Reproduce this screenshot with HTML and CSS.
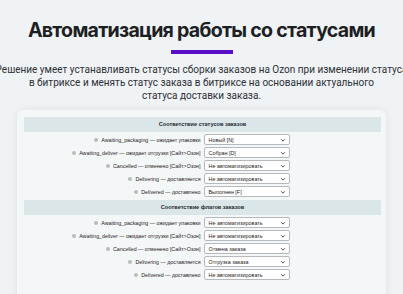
FILE: index.html
```html
<!DOCTYPE html>
<html lang="ru">
<head>
    <meta charset="utf-8">
    <title>Автоматизация работы со статусами</title>
    <link rel="stylesheet" href="styles.css">
</head>
<body>
<div class="intro">
    <h1>Автоматизация работы со статусами</h1>
    <div class="line"></div>
    <p>Решение умеет устанавливать статусы сборки заказов на Ozon при изменении статуса<br>в битриксе и менять статус заказа в битриксе на основании актуального<br>статуса доставки заказа.</p>
</div>

<div class="card">
    <div class="group">
        <div class="head">Соответствие статусов заказов</div>
        <div class="row">
            <div class="label"><i class="hint"></i>Awaiting_packaging — ожидает упаковки</div>
            <div class="field"><div class="select"><span>Новый [N]</span><svg viewBox="0 0 8 8"><path d="M1.5 3 L4 5.5 L6.5 3"/></svg></div></div>
        </div>
        <div class="row">
            <div class="label"><i class="hint"></i>Awaiting_deliver — ожидает отгрузки [Сайт&gt;Озон]</div>
            <div class="field"><div class="select"><span>Собран [D]</span><svg viewBox="0 0 8 8"><path d="M1.5 3 L4 5.5 L6.5 3"/></svg></div></div>
        </div>
        <div class="row">
            <div class="label"><i class="hint"></i>Cancelled — отменено [Сайт&gt;Озон]</div>
            <div class="field"><div class="select"><span>Не автоматизировать</span><svg viewBox="0 0 8 8"><path d="M1.5 3 L4 5.5 L6.5 3"/></svg></div></div>
        </div>
        <div class="row">
            <div class="label"><i class="hint"></i>Delivering — доставляется</div>
            <div class="field"><div class="select"><span>Не автоматизировать</span><svg viewBox="0 0 8 8"><path d="M1.5 3 L4 5.5 L6.5 3"/></svg></div></div>
        </div>
        <div class="row">
            <div class="label"><i class="hint"></i>Delivered — доставлено</div>
            <div class="field"><div class="select"><span>Выполнен [F]</span><svg viewBox="0 0 8 8"><path d="M1.5 3 L4 5.5 L6.5 3"/></svg></div></div>
        </div>
    </div>

    <div class="group">
        <div class="head">Соответствие флагов заказов</div>
        <div class="row">
            <div class="label"><i class="hint"></i>Awaiting_packaging — ожидает упаковки</div>
            <div class="field"><div class="select"><span>Не автоматизировать</span><svg viewBox="0 0 8 8"><path d="M1.5 3 L4 5.5 L6.5 3"/></svg></div></div>
        </div>
        <div class="row">
            <div class="label"><i class="hint"></i>Awaiting_deliver — ожидает отгрузки [Сайт&gt;Озон]</div>
            <div class="field"><div class="select"><span>Не автоматизировать</span><svg viewBox="0 0 8 8"><path d="M1.5 3 L4 5.5 L6.5 3"/></svg></div></div>
        </div>
        <div class="row">
            <div class="label"><i class="hint"></i>Cancelled — отменено [Сайт&gt;Озон]</div>
            <div class="field"><div class="select"><span>Отмена заказа</span><svg viewBox="0 0 8 8"><path d="M1.5 3 L4 5.5 L6.5 3"/></svg></div></div>
        </div>
        <div class="row">
            <div class="label"><i class="hint"></i>Delivering — доставляется</div>
            <div class="field"><div class="select"><span>Отгрузка заказа</span><svg viewBox="0 0 8 8"><path d="M1.5 3 L4 5.5 L6.5 3"/></svg></div></div>
        </div>
        <div class="row">
            <div class="label"><i class="hint"></i>Delivered — доставлено</div>
            <div class="field"><div class="select"><span>Не автоматизировать</span><svg viewBox="0 0 8 8"><path d="M1.5 3 L4 5.5 L6.5 3"/></svg></div></div>
        </div>
    </div>
</div>
</body>
</html>
```

FILE: styles.css
```css
body {
    margin: 0;
    background-color: #eff3f6;
    font-family: Roboto, Arial, sans-serif;
    overflow: hidden;
}

.intro {
    text-align: center;
    padding-top: 17px;
}

.intro h1 {
    margin: 0;
    font-family: Inter, Arial, sans-serif;
    font-size: 19.6px;
    line-height: 26px;
    font-weight: 700;
    color: #1e1f22;
    letter-spacing: -0.75px;
    white-space: nowrap;
}

.line {
    width: 62px;
    height: 4px;
    margin: 7px auto 0;
    background-color: #5a0dc6;
}

.intro p {
    margin: 9px -20px 0;
    font-size: 10px;
    line-height: 13px;
    color: #2e3033;
    white-space: nowrap;
}

.card {
    margin: 8px 17px 0;
    padding: 7px 5px 30px 7px;
    background-color: #f4f7f8;
    border-radius: 6px;
    box-shadow: 0 0 8px rgba(0, 0, 0, 0.07);
}

.group {
    margin-bottom: 2px;
}

.head {
    height: 15px;
    line-height: 15px;
    background-color: #dbe6e8;
    text-align: center;
    font-family: "Liberation Sans", Arial, sans-serif;
    font-size: 5.6px;
    font-weight: bold;
    color: #1d2a31;
}

.row {
    display: grid;
    grid-template-columns: 1fr 1fr;
    height: 13px;
    align-items: center;
}

.head + .row {
    margin-top: 1px;
}

.label {
    text-align: right;
    padding-right: 2px;
    font-family: "Liberation Sans", Arial, sans-serif;
    font-size: 5.3px;
    color: #1f2124;
    white-space: nowrap;
}

.hint {
    display: inline-block;
    width: 4px;
    height: 4px;
    margin-right: 3px;
    border-radius: 50%;
    background-color: #b9bcbf;
    vertical-align: 0;
}

.field {
    padding-left: 1px;
}

.select {
    display: flex;
    align-items: center;
    justify-content: space-between;
    width: 86px;
    height: 11px;
    box-sizing: border-box;
    padding: 0 3px 0 4px;
    background-color: #fff;
    border: 1px solid #b5b9bd;
    border-radius: 2px;
    font-family: "Liberation Sans", Arial, sans-serif;
    font-size: 5.4px;
    color: #1f2124;
}

.select svg {
    width: 6px;
    height: 6px;
    fill: none;
    stroke: #3a3d40;
    stroke-width: 1.2;
}
```
